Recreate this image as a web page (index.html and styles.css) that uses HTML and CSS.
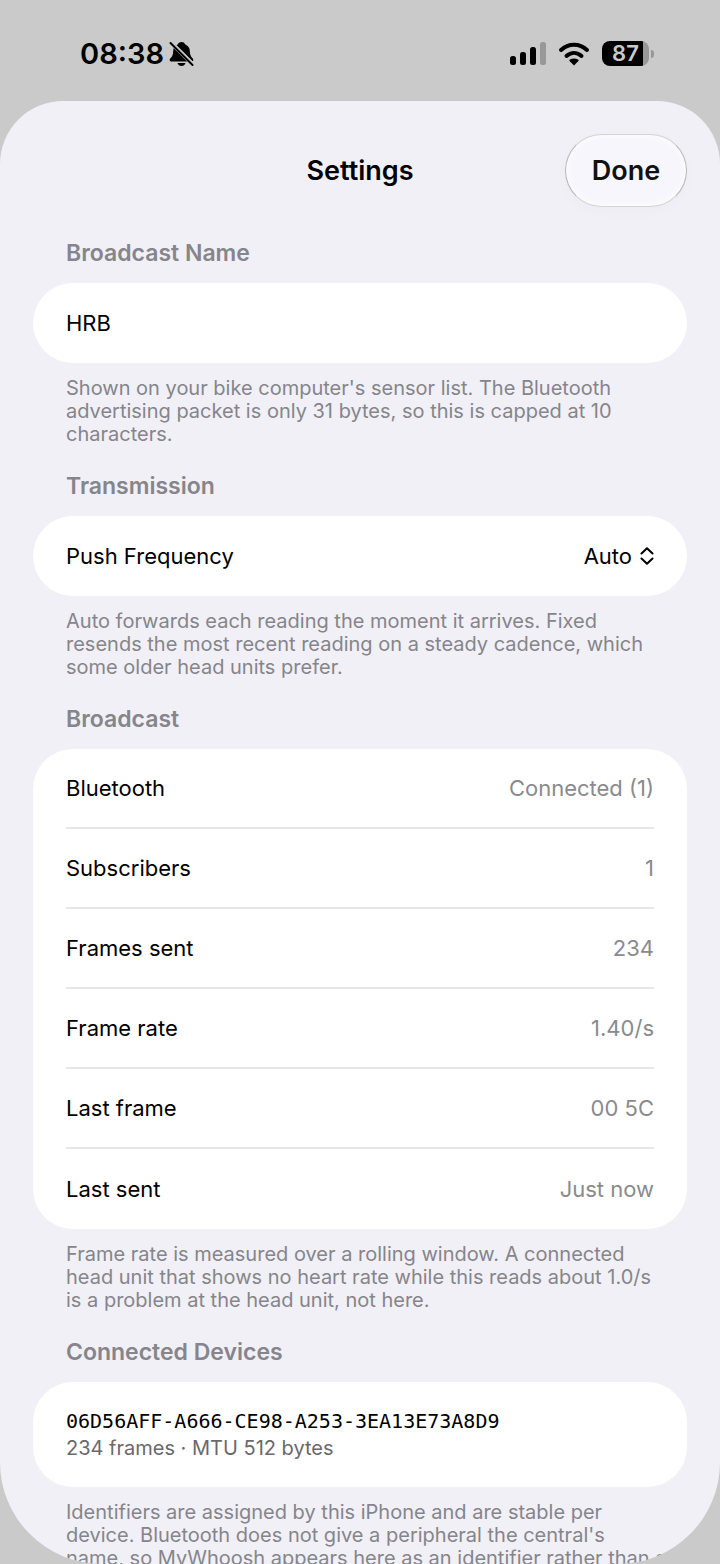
FILE: index.html
```html
<!DOCTYPE html>
<html lang="en">

<head>
    <meta charset="UTF-8">
    <meta name="viewport" content="width=device-width, initial-scale=1.0">
    <title>Settings</title>
    <link rel="stylesheet" href="styles.css">
</head>

<body>

    <div class="status-bar">
        <div class="status-left">
            <span class="time">08:38</span>
            <svg class="bell" width="25" height="26" viewBox="0 0 25 26" aria-hidden="true">
                <path d="M12.500 1c-1.800 0-3 .9-3.500 2.300C6 4.500 4.200 7 4.200 10c0 4-1.200 5.600-3 7.600-1 1.400-.5 2.900 1 2.900h20.600c1.500 0 2-1.500 1-2.900-1.800-2-3-3.600-3-7.600 0-3-1.800-5.500-4.800-6.700C15.500 1.900 14.300 1 12.500 1z" />
                <path d="M8.500 22h8c-.5 2-2 3-4 3s-3.500-1-4-3z" />
                <path class="bell-gap" d="M2.500 2L23.500 23" />
                <path class="bell-slash" d="M1.500 2L23.500 24" />
            </svg>
        </div>
        <div class="status-right">
            <svg width="36" height="24" viewBox="0 0 36 24" aria-hidden="true">
                <rect x="0" y="14" width="6" height="9" rx="2.500" />
                <rect x="10" y="10" width="6" height="13" rx="2.500" />
                <rect x="20" y="5" width="6" height="18" rx="2.500" />
                <rect class="dim" x="30" y="0" width="6" height="23" rx="2.500" />
            </svg>
            <svg width="32" height="24" viewBox="0 0 32 24" aria-hidden="true">
                <path class="wave" d="M3 8C10.500 1 21.500 1 29 8" />
                <path class="wave" d="M8.500 14C13 10 19 10 23.500 14" />
                <path d="M16 23.500l-4.200-4.200c-.6-.7-.5-1.300.2-1.700 2.500-1.400 5.500-1.400 8 0 .7.4.8 1 .2 1.700z" />
            </svg>
            <div class="battery">
                <span class="battery-level">87</span>
                <span class="battery-cap"></span>
            </div>
        </div>
    </div>

    <main class="sheet">
        <header class="sheet-header">
            <h1>Settings</h1>
            <button class="done" type="button">Done</button>
        </header>

        <section>
            <h2><label for="name">Broadcast Name</label></h2>
            <div class="card">
                <div class="row">
                    <input id="name" type="text" value="HRB" maxlength="10">
                </div>
            </div>
            <p class="note">Shown on your bike computer's sensor list. The Bluetooth advertising packet is only 31 bytes, so this is capped at 10 characters.</p>
        </section>

        <section>
            <h2>Transmission</h2>
            <div class="card">
                <div class="row">
                    <label for="frequency">Push Frequency</label>
                    <div class="picker">
                        <select id="frequency">
                            <option>Auto</option>
                            <option>Fixed</option>
                        </select>
                        <svg width="14" height="18" viewBox="0 0 14 18" aria-hidden="true">
                            <path d="M1.500 6.500L7 1.200l5.500 5.300M1.500 11.500L7 16.800l5.500-5.300" />
                        </svg>
                    </div>
                </div>
            </div>
            <p class="note">Auto forwards each reading the moment it arrives. Fixed resends the most recent reading on a steady cadence, which some older head units prefer.</p>
        </section>

        <section>
            <h2>Broadcast</h2>
            <dl class="card">
                <div class="row">
                    <dt>Bluetooth</dt>
                    <dd>Connected (1)</dd>
                </div>
                <div class="row">
                    <dt>Subscribers</dt>
                    <dd>1</dd>
                </div>
                <div class="row">
                    <dt>Frames sent</dt>
                    <dd>234</dd>
                </div>
                <div class="row">
                    <dt>Frame rate</dt>
                    <dd>1.40/s</dd>
                </div>
                <div class="row">
                    <dt>Last frame</dt>
                    <dd>00 5C</dd>
                </div>
                <div class="row">
                    <dt>Last sent</dt>
                    <dd>Just now</dd>
                </div>
            </dl>
            <p class="note">Frame rate is measured over a rolling window. A connected head unit that shows no heart rate while this reads about 1.0/s is a problem at the head unit, not here.</p>
        </section>

        <section>
            <h2>Connected Devices</h2>
            <div class="card device">
                <p class="device-id">06D56AFF-A666-CE98-A253-3EA13E73A8D9</p>
                <p class="device-info">234 frames · MTU 512 bytes</p>
            </div>
            <p class="note">Identifiers are assigned by this iPhone and are stable per device. Bluetooth does not give a peripheral the central's<br>name, so MyWhoosh appears here as an identifier rather than a</p>
        </section>
    </main>

</body>

</html>
```

FILE: styles.css
```css
* {
    box-sizing: border-box;
}

body {
    margin: 0;
    height: 100vh;
    display: flex;
    flex-direction: column;
    overflow: hidden;
    background-color: #cacaca;
    color: #000;
    font-family: Inter, "Liberation Sans", sans-serif;
    font-size: 22px;
    line-height: 28px;
}

input,
select,
button {
    font: inherit;
    color: inherit;
}

h1,
h2,
p,
dl,
dd {
    margin: 0;
}

/* status bar */
.status-bar {
    flex: none;
    height: 101px;
    padding: 6px 66px 0 80px;
    display: flex;
    justify-content: space-between;
    align-items: center;
}

.status-left {
    display: flex;
    align-items: center;
    gap: 5px;
}

.time {
    font-size: 29px;
    font-weight: 600;
}

.bell-gap,
.bell-slash {
    fill: none;
    stroke: #000;
    stroke-width: 2;
    stroke-linecap: round;
}

.bell-gap {
    stroke: #cacaca;
    stroke-width: 4;
}

.status-right {
    display: flex;
    align-items: center;
    gap: 12px;
}

.dim {
    fill: #989898;
}

.wave {
    fill: none;
    stroke: #000;
    stroke-width: 4;
    stroke-linecap: round;
}

.battery {
    display: flex;
    align-items: center;
    gap: 2px;
}

.battery-level {
    width: 47px;
    height: 25px;
    border-radius: 8px;
    background: linear-gradient(to right, #000 87%, #989898 87%);
    color: #cacaca;
    font-size: 22px;
    font-weight: 600;
    line-height: 25px;
    text-align: center;
}

.battery-cap {
    width: 3px;
    height: 8px;
    border-radius: 0 4px 4px 0;
    background-color: #989898;
}

/* sheet */
.sheet {
    flex: 1;
    min-height: 0;
    overflow: hidden;
    padding: 33px 33px 0;
    border-radius: 63px 63px 102px 102px;
    background-color: #f1f0f6;
}

.sheet-header {
    display: grid;
    grid-template-columns: 1fr auto 1fr;
    align-items: center;
    margin-bottom: 32px;
}

h1 {
    grid-column: 2;
    font-size: 27px;
    font-weight: 600;
}

.done {
    justify-self: end;
    width: 122px;
    height: 73px;
    padding: 0;
    border: 1px solid #b8b8bc;
    border-block-color: #d4d4d8;
    border-radius: 37px;
    background-color: #f7f6fc;
    box-shadow: 0 4px 16px rgb(0 0 0 / 2%), inset 0 0 8px #fff;
    color: #111;
    font-size: 27px;
    font-weight: 600;
}

section {
    margin-bottom: 26px;
}

h2 {
    margin: 0 33px 16px;
    font-size: 23px;
    font-weight: 600;
    color: #85858b;
}

.card {
    padding: 0 33px;
    border-radius: 40px;
    background-color: #fff;
}

.row {
    height: 80px;
    display: flex;
    justify-content: space-between;
    align-items: center;
}

.row:not(:last-child) {
    border-bottom: 2px solid #e6e6e6;
}

.row input {
    width: 100%;
    padding: 0;
    border: 0;
    outline: 0;
    background: none;
}

.row dd {
    color: #8a8a8e;
}

.picker {
    display: flex;
    align-items: center;
    gap: 8px;
}

.picker select {
    appearance: none;
    field-sizing: content;
    padding: 0;
    border: 0;
    background: none;
}

.picker svg {
    fill: none;
    stroke: #000;
    stroke-width: 2;
    stroke-linecap: round;
    stroke-linejoin: round;
}

.note {
    margin: 14px 18px 0 33px;
    font-size: 20px;
    line-height: 23px;
    color: #85858b;
}

.device {
    padding-block: 26px;
}

.device-id {
    font-family: "DejaVu Sans Mono", monospace;
    font-size: 20px;
    line-height: 27px;
}

.device-info {
    font-size: 20px;
    line-height: 26px;
    color: #69696c;
}
```
